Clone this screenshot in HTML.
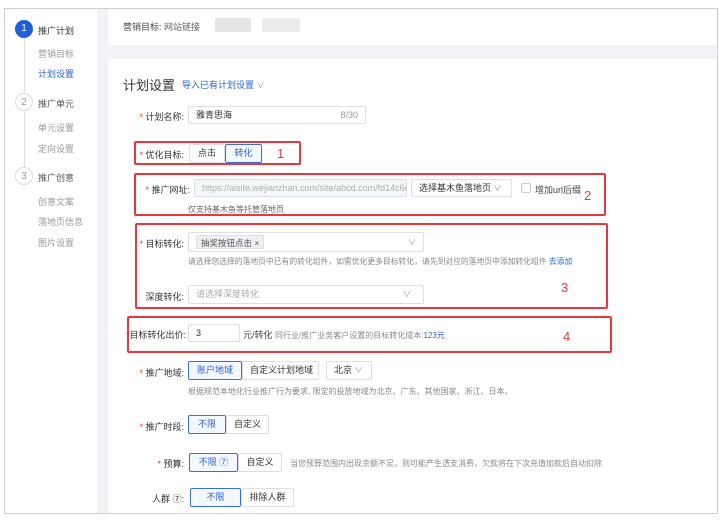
<!DOCTYPE html>
<html><head><meta charset="utf-8"><style>
*{margin:0;padding:0;box-sizing:border-box}
body{width:724px;height:525px;background:#fff;font-family:"Liberation Sans","Noto Sans CJK SC",sans-serif;font-size:9px;color:#333;position:relative;overflow:hidden}
.a{position:absolute;white-space:nowrap}
.frame{left:4px;top:8px;width:714px;height:506px;border:1px solid #cfcfcf;background:#f2f3f6}
.side{left:5px;top:9px;width:92px;height:504px;background:#fff}
.card{background:#fff}
.circ{width:18px;height:18px;border-radius:50%;text-align:center;line-height:17px;font-size:10px}
.c1{background:#1f5fd8;color:#fff}
.c2{border:1px solid #ddd;color:#999;background:#fff}
.sub{color:#999;font-size:9px}
.lbl{text-align:right;color:#333}
.st{color:#e33}
.box{border:1px solid #dcdfe6;border-radius:2px;background:#fff;height:19px;line-height:17px;padding:0 7px}
.sel{border:1px solid #3a6fd8;color:#2a62d0;background:#f3f7ff;text-align:center}
.btn{text-align:center}
.red{border:2px solid #e8383d;border-radius:2px}
.num{color:#e8383d;font-size:13px}
.hint{color:#888;font-size:8px}
.blue{color:#2a62d0}
.chev{color:#999;font-size:8px}
</style></head><body>
<div class="a frame"></div>
<div class="a side"></div>
<div class="a" style="left:24px;top:38px;width:1px;height:54px;background:#ddd"></div>
<div class="a" style="left:24px;top:112px;width:1px;height:56px;background:#ddd"></div>
<div class="a circ c1" style="left:15px;top:20px">1</div>
<div class="a" style="left:38px;top:24px;color:#333">推广计划</div>
<div class="a sub" style="left:38px;top:47px">营销目标</div>
<div class="a" style="left:38px;top:67px;color:#2a62d0">计划设置</div>
<div class="a circ c2" style="left:15px;top:93px">2</div>
<div class="a" style="left:38px;top:97px;color:#555">推广单元</div>
<div class="a sub" style="left:38px;top:121px">单元设置</div>
<div class="a sub" style="left:38px;top:142px">定向设置</div>
<div class="a circ c2" style="left:15px;top:167px">3</div>
<div class="a" style="left:38px;top:171px;color:#555">推广创意</div>
<div class="a sub" style="left:38px;top:195px">创意文案</div>
<div class="a sub" style="left:38px;top:215px">落地页信息</div>
<div class="a sub" style="left:38px;top:236px">图片设置</div>

<div class="a card" style="left:108px;top:9px;width:609px;height:36px"></div>
<div class="a card" style="left:108px;top:59px;width:609px;height:454px"></div>
<div class="a" style="left:123px;top:20px;color:#444">营销目标: <span style="color:#666">网站链接</span></div>
<div class="a" style="left:215px;top:18px;width:36px;height:14px;background:#e4e4e4"></div>
<div class="a" style="left:262px;top:18px;width:38px;height:14px;background:#ececec"></div>

<div class="a" style="left:123px;top:75px;font-size:13px;color:#333">计划设置</div>
<div class="a blue" style="left:182px;top:78px">导入已有计划设置 <span class="chev">∨</span></div>

<div class="a lbl" style="left:130px;top:110px;width:54px"><span class="st">*</span> 计划名称:</div>
<div class="a box" style="left:188px;top:106px;width:178px;height:18px">雅青思海<span style="float:right;color:#999">8/30</span></div>

<div class="a red" style="left:134px;top:141px;width:167px;height:24px"></div>
<div class="a lbl" style="left:130px;top:148px;width:54px"><span class="st">*</span> 优化目标:</div>
<div class="a box btn" style="left:189px;top:144px;width:36px">点击</div>
<div class="a box btn sel" style="left:225px;top:144px;width:37px">转化</div>
<div class="a num" style="left:277px;top:146px">1</div>

<div class="a red" style="left:134px;top:173px;width:472px;height:43px"></div>
<div class="a lbl" style="left:130px;top:183px;width:60px"><span class="st">*</span> 推广网址:</div>
<div class="a box" style="left:194px;top:179px;width:213px;height:18px;background:#f5f6f8;color:#b0b0b0;overflow:hidden">https://aisite.wejianzhan.com/site/abcd.com/fd14c6d8-5a</div>
<div class="a box" style="left:411px;top:179px;width:101px;height:18px">选择基木鱼落地页 <span class="chev">∨</span></div>
<div class="a" style="left:521px;top:183px;width:10px;height:10px;border:1px solid #ccc;border-radius:2px"></div>
<div class="a" style="left:535px;top:183px;color:#444">增加url后缀</div>
<div class="a num" style="left:584px;top:188px">2</div>
<div class="a hint" style="left:188px;top:204px;color:#666">仅支持基木鱼等托管落地页</div>

<div class="a red" style="left:135px;top:223px;width:473px;height:86px"></div>
<div class="a lbl" style="left:130px;top:237px;width:54px"><span class="st">*</span> 目标转化:</div>
<div class="a box" style="left:188px;top:232px;width:236px;height:20px"></div>
<div class="a" style="left:196px;top:235px;height:14px;line-height:14px;padding:0 4px;background:#eef0f3;border:1px solid #e0e0e0;color:#555;font-size:8.5px">抽奖按钮点击 ×</div>
<div class="a chev" style="left:408px;top:237px">∨</div>
<div class="a hint" style="left:188px;top:256px;font-size:7.8px">请选择您选择的落地页中已有的转化组件，如需优化更多目标转化，请先到对应的落地页中添加转化组件 <span class="blue">去添加</span></div>
<div class="a lbl" style="left:130px;top:290px;width:54px">深度转化:</div>
<div class="a box" style="left:188px;top:285px;width:236px;height:19px;color:#aaa">请选择深度转化<span class="chev" style="float:right;margin-right:5px">∨</span></div>
<div class="a num" style="left:561px;top:280px">3</div>

<div class="a red" style="left:127px;top:316px;width:485px;height:37px"></div>
<div class="a" style="left:126px;top:328px"><span class="st">*</span>目标转化出价:</div>
<div class="a box" style="left:188px;top:324px;width:52px;height:18px">3</div>
<div class="a" style="left:243px;top:328px;color:#444">元/转化 <span class="hint">同行业/推广业务客户设置的目标转化成本:</span><span class="blue" style="font-size:8px">123元</span></div>
<div class="a num" style="left:563px;top:329px">4</div>

<div class="a lbl" style="left:130px;top:366px;width:54px"><span class="st">*</span> 推广地域:</div>
<div class="a box btn sel" style="left:188px;top:361px;width:54px">账户地域</div>
<div class="a box btn" style="left:242px;top:361px;width:77px">自定义计划地域</div>
<div class="a box" style="left:326px;top:361px;width:46px">北京 <span class="chev">∨</span></div>
<div class="a hint" style="left:188px;top:386px">根据规范本地化行业推广行为要求, 限定的投放地域为北京、广东、其他国家、浙江、日本。</div>

<div class="a lbl" style="left:130px;top:420px;width:54px"><span class="st">*</span> 推广时段:</div>
<div class="a box btn sel" style="left:188px;top:415px;width:38px">不限</div>
<div class="a box btn" style="left:226px;top:415px;width:43px">自定义</div>

<div class="a lbl" style="left:130px;top:457px;width:54px"><span class="st">*</span> 预算:</div>
<div class="a box btn sel" style="left:189px;top:453px;width:49px">不限 ⑦</div>
<div class="a box btn" style="left:238px;top:453px;width:44px">自定义</div>
<div class="a hint" style="left:290px;top:458px">当您预算范围内出现余额不足，则可能产生透支消费，欠款将在下次充值加款后自动扣除</div>

<div class="a lbl" style="left:130px;top:492px;width:54px">人群 ⑦:</div>
<div class="a box btn sel" style="left:190px;top:488px;width:51px">不限</div>
<div class="a box btn" style="left:241px;top:488px;width:53px">排除人群</div>
</body></html>
